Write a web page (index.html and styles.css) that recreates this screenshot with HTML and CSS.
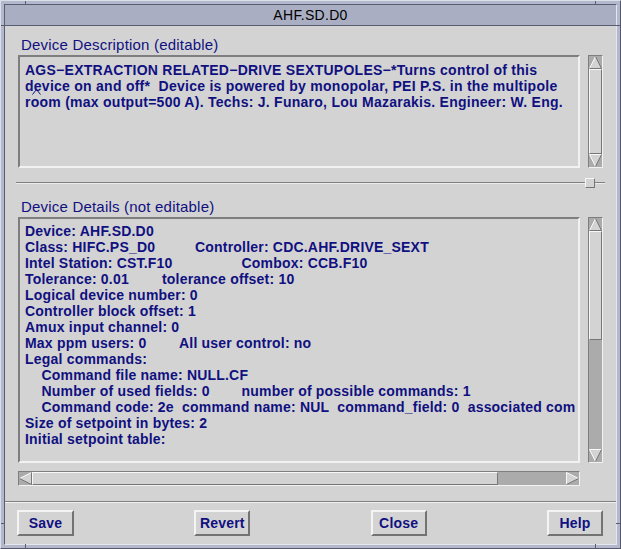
FILE: index.html
```html
<!DOCTYPE html>
<html>
<head>
<meta charset="utf-8">
<link rel="stylesheet" href="styles.css">
</head>
<body>
<div class="win">
  <div class="inner">
    <div class="title">AHF.SD.D0</div>
    <div class="content">
      <div class="label l1">Device Description (editable)</div>
      <div class="row r1">
        <div class="textbox desc">
          <div class="line">AGS−EXTRACTION RELATED−DRIVE SEXTUPOLES−*Turns control of this</div>
          <div class="line">device on and off*  Device is powered by monopolar, PEI P.S. in the multipole</div>
          <div class="line">room (max output=500 A). Techs: J. Funaro, Lou Mazarakis. Engineer: W. Eng.</div>
          <svg class="caret" width="9" height="6" viewBox="0 0 9 6"><polyline points="0.5,5.5 4.5,0.5 8.5,5.5" fill="none" stroke="#101080" stroke-width="1"/></svg>
        </div>
        <div class="vscroll">
          <svg class="arrow" width="13" height="13" viewBox="0 0 13 13"><polygon points="6.5,0.5 12.5,12.5 0.5,12.5" fill="#d3d3d3"/><polyline points="0.5,12.5 6.5,0.5" fill="none" stroke="#f8f8f8"/><polyline points="6.5,0.5 12.5,12.5 0.5,12.5" fill="none" stroke="#767676"/></svg>
          <div class="slider full"></div>
          <svg class="arrow" width="13" height="13" viewBox="0 0 13 13"><polygon points="0.5,0.5 12.5,0.5 6.5,12.5" fill="#d3d3d3"/><polyline points="6.5,12.5 0.5,0.5 12.5,0.5" fill="none" stroke="#f8f8f8"/><polyline points="12.5,0.5 6.5,12.5" fill="none" stroke="#767676"/></svg>
        </div>
      </div>
      <div class="sash">
        <div class="sash-line"></div>
        <div class="sash-knob"></div>
      </div>
      <div class="label l2">Device Details (not editable)</div>
      <div class="row r2">
        <div class="textbox details">
          <div class="line">Device: AHF.SD.D0</div>
          <div class="line"><span class="c1 w170">Class: HIFC.PS_D0</span>Controller: CDC.AHF.DRIVE_SEXT</div>
          <div class="line"><span class="c1 w216">Intel Station: CST.F10</span>Combox: CCB.F10</div>
          <div class="line"><span class="c1 w137">Tolerance: 0.01</span>tolerance offset: 10</div>
          <div class="line">Logical device number: 0</div>
          <div class="line">Controller block offset: 1</div>
          <div class="line">Amux input channel: 0</div>
          <div class="line"><span class="c1 w154">Max ppm users: 0</span>All user control: no</div>
          <div class="line">Legal commands:</div>
          <div class="line ind">Command file name: NULL.CF</div>
          <div class="line ind"><span class="c1 w200">Number of used fields: 0</span>number of possible commands: 1</div>
          <div class="line ind">Command code: 2e  command name: NUL  command_field: 0  associated com</div>
          <div class="line">Size of setpoint in bytes: 2</div>
          <div class="line">Initial setpoint table:</div>
        </div>
        <div class="vscroll">
          <svg class="arrow" width="13" height="13" viewBox="0 0 13 13"><polygon points="6.5,0.5 12.5,12.5 0.5,12.5" fill="#d3d3d3"/><polyline points="0.5,12.5 6.5,0.5" fill="none" stroke="#f8f8f8"/><polyline points="6.5,0.5 12.5,12.5 0.5,12.5" fill="none" stroke="#767676"/></svg>
          <div class="slider part-v"></div>
          <div class="trough"></div>
          <svg class="arrow" width="13" height="13" viewBox="0 0 13 13"><polygon points="0.5,0.5 12.5,0.5 6.5,12.5" fill="#d3d3d3"/><polyline points="6.5,12.5 0.5,0.5 12.5,0.5" fill="none" stroke="#f8f8f8"/><polyline points="12.5,0.5 6.5,12.5" fill="none" stroke="#767676"/></svg>
        </div>
      </div>
      <div class="hscroll">
        <svg class="arrow" width="13" height="13" viewBox="0 0 13 13"><polygon points="0.5,6.5 12.5,0.5 12.5,12.5" fill="#d3d3d3"/><polyline points="12.5,0.5 0.5,6.5" fill="none" stroke="#f8f8f8"/><polyline points="0.5,6.5 12.5,12.5 12.5,0.5" fill="none" stroke="#767676"/></svg>
        <div class="slider part-h"></div>
        <div class="trough"></div>
        <svg class="arrow" width="13" height="13" viewBox="0 0 13 13"><polygon points="0.5,0.5 12.5,6.5 0.5,12.5" fill="#d3d3d3"/><polyline points="0.5,12.5 0.5,0.5 12.5,6.5" fill="none" stroke="#f8f8f8"/><polyline points="12.5,6.5 0.5,12.5" fill="none" stroke="#767676"/></svg>
      </div>
      <div class="sep"></div>
      <div class="buttons">
        <div class="btn save">Save</div>
        <div class="btn">Revert</div>
        <div class="btn">Close</div>
        <div class="btn">Help</div>
      </div>
    </div>
  </div>
  <div class="tick tv t-top-l"></div>
  <div class="tick tv t-top-r"></div>
  <div class="tick tv t-bot-l"></div>
  <div class="tick tv t-bot-r"></div>
  <div class="tick th t-left-t"></div>
  <div class="tick th t-right-t"></div>
  <div class="tick th t-left-b"></div>
  <div class="tick th t-right-b"></div>
</div>
</body>
</html>
```
FILE: styles.css
```css
html, body {
  margin: 0;
  padding: 0;
  background: #b4b8cc;
}
body {
  font-family: "Liberation Sans", Arial, sans-serif;
}
.win {
  position: relative;
  width: 621px;
  height: 549px;
  box-sizing: border-box;
  border: 1px solid;
  border-color: #dcdee8 #55586a #55586a #dcdee8;
  background: #b4b8cc;
  padding: 3px;
}
.inner {
  box-sizing: border-box;
  height: 100%;
  border: 1px solid;
  border-color: #5a5d70 #e4e6ee #e4e6ee #5a5d70;
  background: #d3d3d3;
  display: flex;
  flex-direction: column;
}
.title {
  flex: none;
  height: 20px;
  background: #aaaec2;
  border-bottom: 1px solid #5a5d70;
  text-align: center;
  font-size: 14px;
  line-height: 20px;
  letter-spacing: 0.3px;
  color: #000;
}
.content {
  flex: 1;
  display: flex;
  flex-direction: column;
  padding: 0 13px 0 13px;
}
.label {
  flex: none;
  height: 18px;
  line-height: 18px;
  font-size: 15px;
  letter-spacing: 0.2px;
  color: #101080;
  margin-left: 3px;
}
.l1 { margin-top: 10px; }
.row {
  flex: none;
  display: flex;
  gap: 8px;
  margin-top: 1px;
}
.r1 { height: 113px; }
.r2 { height: 246px; }
.textbox {
  position: relative;
  box-sizing: border-box;
  width: 562px;
  height: 100%;
  border: 2px solid;
  border-color: #7e7e7e #f2f2f2 #f2f2f2 #7e7e7e;
  padding: 5px 0 0 5px;
  overflow: hidden;
  color: #101080;
  font-size: 14px;
  font-weight: bold;
  letter-spacing: 0.2px;
}
.desc { letter-spacing: 0.26px; }
.details { padding-top: 4px; }
.line {
  height: 16px;
  line-height: 16px;
  white-space: pre;
}
.ind { padding-left: 16.5px; }
.c1 { display: inline-block; }
.w170 { width: 170px; }
.w216 { width: 216.5px; }
.w137 { width: 137px; }
.w154 { width: 154px; }
.w200 { width: 200px; }
.caret {
  position: absolute;
  left: 12px;
  top: 32px;
}
.vscroll {
  box-sizing: border-box;
  width: 15px;
  height: 100%;
  border: 1px solid;
  border-color: #7e7e7e #f2f2f2 #f2f2f2 #7e7e7e;
  background: #ababab;
  display: flex;
  flex-direction: column;
}
.arrow {
  display: block;
  flex: none;
}
.slider {
  box-sizing: border-box;
  background: #d3d3d3;
  border: 1px solid;
  border-color: #f8f8f8 #767676 #767676 #f8f8f8;
}
.slider.full { flex: 1; }
.slider.part-v { height: 109px; flex: none; }
.trough { flex: 1; }
.hscroll {
  flex: none;
  box-sizing: border-box;
  width: 562px;
  height: 15px;
  margin-top: 8px;
  border: 1px solid;
  border-color: #7e7e7e #f2f2f2 #f2f2f2 #7e7e7e;
  background: #ababab;
  display: flex;
}
.slider.part-h { width: 466px; flex: none; }
.sash {
  position: relative;
  flex: none;
  height: 30px;
  margin: 0 -2px;
}
.sash-line {
  margin-top: 14px;
  height: 1px;
  background: #808080;
  border-bottom: 1px solid #ececec;
}
.sash-knob {
  position: absolute;
  left: 569px;
  top: 10px;
  box-sizing: border-box;
  width: 10px;
  height: 10px;
  background: #d3d3d3;
  border: 1px solid;
  border-color: #f8f8f8 #767676 #767676 #f8f8f8;
}
.l2 { margin-top: 0; }
.sep {
  flex: none;
  margin: 15px -13px 0;
  height: 1px;
  background: #7e7e7e;
  border-bottom: 1px solid #f2f2f2;
}
.buttons {
  flex: none;
  display: flex;
  justify-content: space-between;
  margin: 7px 0 0 -1px;
  height: 26px;
}
.btn {
  box-sizing: border-box;
  width: 56px;
  height: 26px;
  border: 2px solid;
  border-color: #f4f4f4 #737373 #737373 #f4f4f4;
  text-align: center;
  line-height: 22px;
  font-size: 14px;
  font-weight: bold;
  letter-spacing: 0.2px;
  color: #101080;
}
.btn.save { width: 57px; }
.tick {
  position: absolute;
  background: #5a5d70;
}
.tv { width: 1px; height: 4px; }
.th { height: 1px; width: 4px; }
.t-top-l { left: 24px; top: 0; }
.t-top-r { left: 594px; top: 0; }
.t-bot-l { left: 24px; bottom: 0; }
.t-bot-r { left: 594px; bottom: 0; }
.t-left-t { left: 0; top: 24px; }
.t-right-t { right: 0; top: 24px; }
.t-left-b { left: 0; bottom: 24px; }
.t-right-b { right: 0; bottom: 24px; }
```
